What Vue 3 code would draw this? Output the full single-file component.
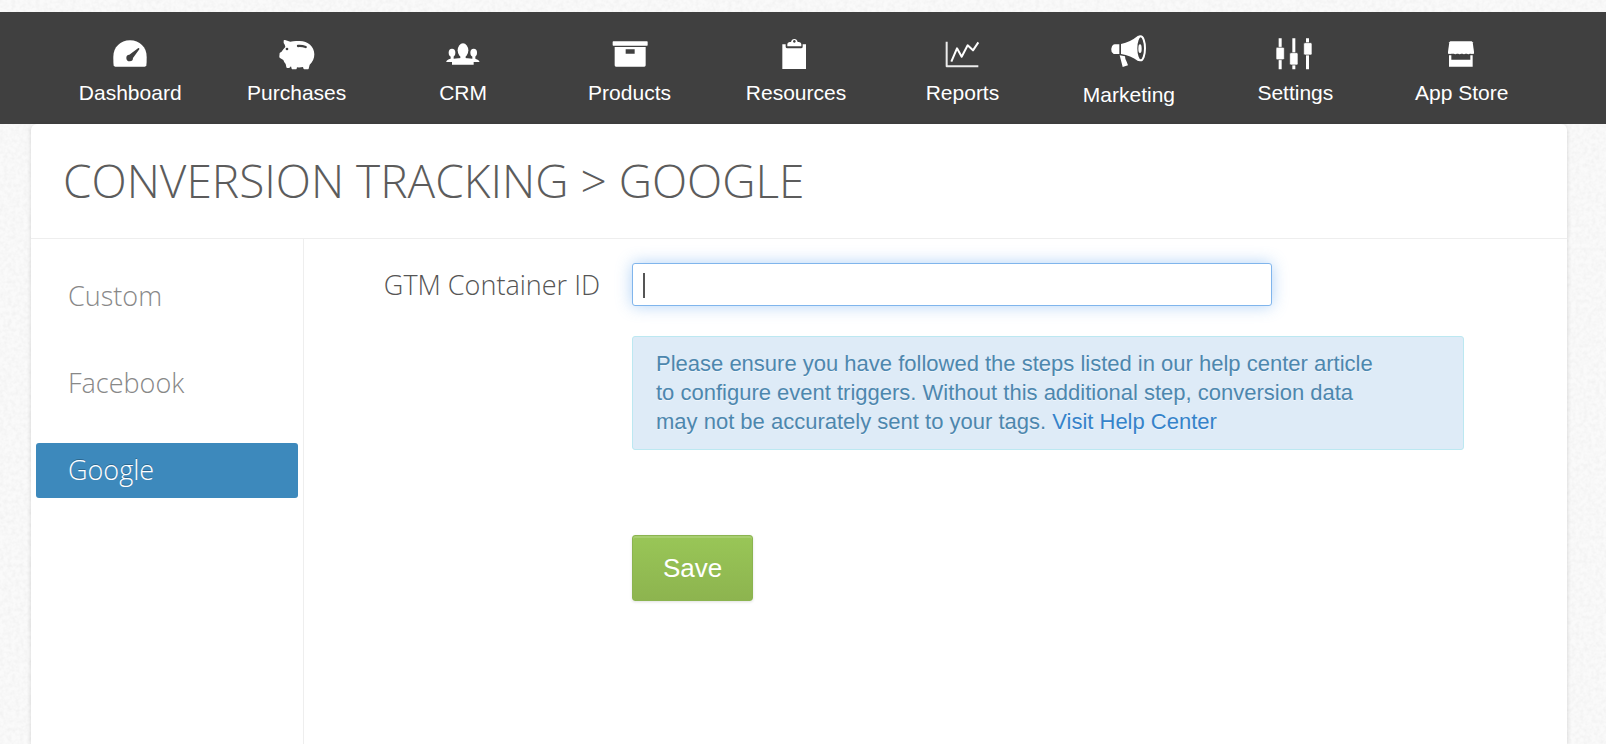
<script setup>
import { ref } from 'vue'

const containerId = ref('')

const navItems = [
  { id: 'dashboard', label: 'Dashboard' },
  { id: 'purchases', label: 'Purchases' },
  { id: 'crm', label: 'CRM' },
  { id: 'products', label: 'Products' },
  { id: 'resources', label: 'Resources' },
  { id: 'reports', label: 'Reports' },
  { id: 'marketing', label: 'Marketing' },
  { id: 'settings', label: 'Settings' },
  { id: 'apps', label: 'App Store' }
]

const tabs = ['Custom', 'Facebook', 'Google']
const activeTab = ref('Google')
</script>

<template>
  <div class="page">
    <svg class="grain" aria-hidden="true">
      <filter id="paper">
        <feTurbulence type="fractalNoise" baseFrequency="0.25" numOctaves="2" seed="4" />
        <feColorMatrix type="matrix" values="0 0 0 0 0  0 0 0 0 0  0 0 0 0 0  0.06 0 0 0 -0.02" />
      </filter>
      <rect width="100%" height="100%" filter="url(#paper)" />
    </svg>

    <nav class="nav" aria-label="Main">
      <a v-for="item in navItems" :key="item.id" class="nav-item" href="#">
        <svg
          class="icon"
          :class="{ tall: item.id === 'marketing' }"
          :viewBox="item.id === 'marketing' ? '0 0 108 114' : '0 0 108 108'"
          fill="#fff"
          aria-hidden="true"
        >
          <g v-if="item.id === 'dashboard'">
            <path d="M4 62C4 34 25 13 54 13s50 21 50 49c0 10 0 19-1 26q-1 4-5 4H10q-4 0-5-4C4 81 4 72 4 62z" />
            <path fill="#3f3f3f" d="M79 36q4 0 3 4L63 66a10 10 0 1 1-11-10z" />
          </g>
          <g v-else-if="item.id === 'purchases'">
            <path d="M14 14q0-3 4-2l16 5C43 14 54 15 62 15c25 0 44 17 44 40 0 13-5 23-14 31l-3 12q-1 2-4 2H76q-2 0-3-3l-1-4q-9 2-18 1l-1 4q-1 2-3 2h-9q-2 0-3-2l-2-7-3 3q-1 2-3 2h-5q-3 0-3-3l-2-9q-5-5-7-12L3 66q-3-1-2-5l1-10q1-2 5-3c4-6 8-10 12-15-1-5-2-8-5-12z" />
            <circle cx="24" cy="39" r="4" fill="#3f3f3f" />
            <path d="M57 30q12-1 23 3" fill="none" stroke="#3f3f3f" stroke-width="7" stroke-linecap="round" />
          </g>
          <g v-else-if="item.id === 'crm'">
            <ellipse cx="21" cy="50" rx="10" ry="12" />
            <ellipse cx="86" cy="50" rx="10" ry="12" />
            <path d="M17 59h9v10h-9zM82 59h9v10h-9z" />
            <path d="M4 76q1-5 13-8h9l14-1h28l14 1h9q11 3 12 8v2H86v8H21v-8H4z" />
            <ellipse cx="54" cy="43" rx="19" ry="24" fill="#3f3f3f" />
            <ellipse cx="54" cy="43" rx="16" ry="21" />
            <path d="M46 58h16v9l8 4H38l8-4z" />
          </g>
          <g v-else-if="item.id === 'products'">
            <rect x="2" y="16" width="105" height="13" rx="2" />
            <path d="M8 33h93v55q0 4-4 4H12q-4 0-4-4zM41 40v13h27V40z" fill-rule="evenodd" />
          </g>
          <g v-else-if="item.id === 'resources'">
            <path d="M13 25h10v7q0 5 5 5h41q5 0 5-5v-7h10v74H13z" />
            <path d="M28 31v-7q0-5 7-6h4q2-9 10-9t10 9h4q7 1 7 6v7zM49 12a4 4 0 1 0 .1 0z" fill-rule="evenodd" />
          </g>
          <g v-else-if="item.id === 'reports'" fill="none" stroke="#fff">
            <path d="M8 17v74h95" stroke-width="6" stroke-linejoin="round" opacity=".9" />
            <path d="M22 77l17-40 14 25 18-34 16 15 16-24" stroke-width="6" stroke-linejoin="round" />
          </g>
          <g v-else-if="item.id === 'marketing'">
            <path d="M25 25v29H8L2 48q-3-9 1-17 3-6 8-6zM30 24Q58 18 81-1h6v76h-6Q59 59 30 54z" />
            <ellipse cx="89" cy="37" rx="13" ry="36" fill="#3f3f3f" stroke="#fff" stroke-width="6" />
            <ellipse cx="87" cy="38" rx="5" ry="13" />
            <path d="M26 58l16 3q0 9 5 16l4 11-16 5z" />
          </g>
          <g v-else-if="item.id === 'settings'">
            <path d="M5 7h9v93H5zM46 7h9v93h-9zM87 7h9v93h-9z" />
            <g stroke="#3f3f3f" stroke-width="2">
              <rect x="-3" y="34" width="25" height="37" rx="4" />
              <rect x="38" y="50" width="25" height="37" rx="4" />
              <rect x="80" y="20" width="25" height="37" rx="4" />
            </g>
          </g>
          <g v-else>
            <path d="M19 16h64l3 3 4 28v6H12v-6l4-28z" />
            <path d="M13 52h10q-5 5-10 0zM29 50h10q-5 9-10 0zM42 50h10q-5 9-10 0zM55 50h10q-5 9-10 0zM68 50h10q-5 9-10 0zM79 52h10q-5 5-10 0z" />
            <path d="M15 58h7v13h57V58h7v34H15z" />
          </g>
        </svg>
        <span class="nav-label">{{ item.label }}</span>
      </a>
    </nav>

    <main class="card">
      <header class="card-head">
        <h1>CONVERSION TRACKING &gt; GOOGLE</h1>
      </header>
      <div class="card-body">
        <aside class="tabs">
          <a
            v-for="tab in tabs"
            :key="tab"
            href="#"
            class="tab"
            :class="{ active: tab === activeTab }"
            @click.prevent="activeTab = tab"
          >{{ tab }}</a>
        </aside>
        <form class="form" @submit.prevent>
          <label for="gtm-id">GTM Container ID</label>
          <div class="controls">
            <div class="field">
              <input id="gtm-id" v-model="containerId" type="text" />
              <span v-if="!containerId" class="caret"></span>
            </div>
            <p class="notice">
              Please ensure you have followed the steps listed in our help center article
              to configure event triggers. Without this additional step, conversion data
              may not be accurately sent to your tags. <a href="#">Visit Help Center</a>
            </p>
            <button type="submit">Save</button>
          </div>
        </form>
      </div>
    </main>
  </div>
</template>

<style>
html,
body {
  background: #f9f9f9;
}
</style>

<style scoped>
.page {
  position: relative;
  display: flex;
  flex-direction: column;
  box-sizing: border-box;
  min-height: 100vh;
  padding-top: 12px;
  overflow: hidden;
  font-family: "Liberation Sans", Arial, sans-serif;
  background: #fafafa;
}
.grain {
  position: absolute;
  inset: 0;
  width: 100%;
  height: 100%;
}
.nav {
  position: relative;
  display: grid;
  grid-template-columns: repeat(9, 1fr);
  padding: 24px 61px 19px 47px;
  background: rgba(58, 58, 58, 0.97);
}
.nav-item {
  display: flex;
  flex-direction: column;
  align-items: center;
  gap: 9px;
  color: #fff;
  text-decoration: none;
}
.icon {
  width: 36px;
  height: 36px;
  overflow: visible;
}
.icon.tall {
  height: 38px;
}
.nav-label {
  font-size: 21px;
  line-height: 24px;
  height: 24px;
  white-space: nowrap;
}
.nav-item:has(.tall) {
  margin-bottom: -2px;
}
.card {
  position: relative;
  flex: 1;
  display: flex;
  flex-direction: column;
  margin: 0 39px 0 31px;
  background: #fff;
  border-radius: 6px 6px 0 0;
  box-shadow: 0 1px 4px rgba(0, 0, 0, 0.16);
}
.card-head {
  padding: 26px 32px 28px;
  border-bottom: 1px solid #eee;
}
h1 {
  margin: 0;
  font: 300 46px/60px "Open Sans", sans-serif;
  color: #5c5c5c;
}
.card-body {
  flex: 1;
  display: flex;
}
.tabs {
  display: flex;
  flex-direction: column;
  gap: 32px;
  box-sizing: border-box;
  width: 273px;
  padding: 30px 5px;
  border-right: 1px solid #eee;
}
.tab {
  padding: 0 32px 2px;
  border-radius: 3px;
  font: 300 27px/53px "Open Sans", sans-serif;
  color: #888;
  text-decoration: none;
}
.tab.active {
  color: #fff;
  background: #3d89bc;
  text-shadow: 0 -1px 0 rgba(0, 0, 0, 0.25);
}
.form {
  flex: 1;
  display: grid;
  grid-template-columns: 296px 1fr;
  gap: 32px;
  align-items: start;
  padding: 24px 103px 0 0;
}
label {
  font: 300 27px/43px "Open Sans", sans-serif;
  color: #555;
  text-align: right;
}
.controls {
  display: flex;
  flex-direction: column;
  align-items: flex-start;
}
.field {
  position: relative;
  width: calc(100% * 10 / 13);
}
input {
  display: block;
  box-sizing: border-box;
  width: 100%;
  height: 43px;
  padding: 0 10px;
  border: 1px solid #80b5ec;
  border-radius: 3px;
  outline: none;
  background: #fff;
  box-shadow: 0 0 16px rgba(82, 156, 236, 0.45);
  font: 22px "Liberation Sans", Arial, sans-serif;
  color: #555;
  caret-color: transparent;
}
.caret {
  position: absolute;
  left: 11px;
  top: 10px;
  width: 2px;
  height: 25px;
  background: #555;
}
.notice {
  align-self: stretch;
  margin: 30px 0 85px;
  padding: 12px 70px 13px 23px;
  border: 1px solid #bce8f1;
  border-radius: 3px;
  background: #deebf7;
  color: #4d87ae;
  font-size: 22px;
  line-height: 29px;
  text-shadow: 0 1px 0 rgba(255, 255, 255, 0.5);
}
.notice a {
  color: #3583ca;
  text-decoration: none;
}
button {
  padding: 0 30px;
  height: 66px;
  border: 1px solid #8bb450;
  border-radius: 3px;
  background: linear-gradient(#99c657, #8db44f);
  box-shadow: inset 0 2px 0 rgba(255, 255, 255, 0.15), 0 1px 3px rgba(0, 0, 0, 0.12);
  color: #fff;
  font: 26px "Liberation Sans", Arial, sans-serif;
}
</style>
